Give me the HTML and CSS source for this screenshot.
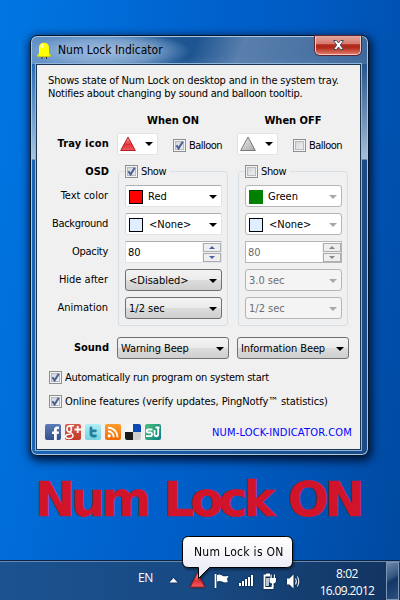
FILE: index.html
```html
<!DOCTYPE html>
<html lang="en">
<head>
<meta charset="utf-8">
<title>Num Lock Indicator</title>
<link rel="stylesheet" href="styles.css">
</head>
<body>
<svg class="defs" width="0" height="0">
  <defs>
    <linearGradient id="red" x1="0" y1="0" x2="0" y2="1"><stop offset="0" stop-color="#f9b0b0"/><stop offset=".55" stop-color="#e03038"/><stop offset="1" stop-color="#f06060"/></linearGradient>
    <linearGradient id="grey" x1="0" y1="0" x2="1" y2="1"><stop offset="0" stop-color="#eee"/><stop offset="1" stop-color="#a8a8a8"/></linearGradient>
    <symbol id="tick" viewBox="0 0 13 13"><path d="M3.4 6.2 5.6 9.4 9.8 2.8" fill="none" stroke="#4a5f97" stroke-width="2"/></symbol>
  </defs>
</svg>
<main class="desktop">
  <section class="window">
    <header class="titlebar">
      <svg class="led" width="14" height="17" viewBox="0 0 14 17"><path d="M2 12V5.500C2 2.500 4 .7 7 .7s5 1.800 5 4.800V12l1.800 1v1.200L11 15H3L.2 14.200V13z" fill="#ff0"/><path d="M.3 13.500 3 14.700h8l2.700-1.200" fill="none" stroke="#c9c400"/><path d="M5 15v2M9.500 15v2" stroke="#333"/><ellipse cx="5" cy="4" rx="1.500" ry="2" fill="#ffffc8"/></svg>
      <h1 class="title">Num Lock Indicator</h1>
      <button class="close" aria-label="Close"><svg width="13" height="12" viewBox="0 0 13 12"><path d="M1.500 1.500h3L6.500 4l2-2.500h3L8.300 6l3.200 4.500h-3l-2-2.500-2 2.500h-3L4.700 6z" fill="#fff" stroke="#4b4a5c"/></svg></button>
    </header>
    <div class="client">
      <p class="intro"><span class="intro-a">Shows state of Num Lock on desktop and in the system tray.</span><br><span class="intro-b">Notifies about changing by sound and balloon tooltip.</span></p>
      <div class="form heads"><span></span><b>When ON</b><b>When OFF</b></div>
      <div class="form tray-row">
        <b class="label">Tray icon</b>
        <div class="tray-set">
          <div class="combo white icon-combo"><svg width="16" height="16" viewBox="0 0 16 16"><path d="M8 1 15.300 14.500H.7z" fill="url(#red)" stroke="#b81c24"/></svg><i class="arrow"></i></div>
          <label class="check"><span class="box"><svg><use href="#tick"/></svg></span>Balloon</label>
        </div>
        <div class="tray-set">
          <div class="combo white icon-combo"><svg width="16" height="16" viewBox="0 0 16 16"><path d="M8 1 15.300 14.500H.7z" fill="url(#grey)" stroke="#777"/></svg><i class="arrow"></i></div>
          <label class="check"><span class="box"></span>Balloon</label>
        </div>
      </div>
      <div class="form osd">
        <div class="labels"><b>OSD</b><span>Text color</span><span class="tight">Background</span><span class="tight">Opacity</span><span>Hide after</span><span>Animation</span></div>
        <div class="group">
          <label class="check"><span class="box"><svg><use href="#tick"/></svg></span>Show</label>
          <div class="combo white"><i class="swatch red"></i>Red<i class="arrow"></i></div>
          <div class="combo white"><i class="swatch pale"></i><span class="wide">&lt;None&gt;</span><i class="arrow"></i></div>
          <div class="spin"><span>80</span><div class="steps"><i class="up"></i><i class="down"></i></div></div>
          <div class="combo"><span>&lt;Disabled&gt;</span><i class="arrow"></i></div>
          <div class="combo">1/2 sec<i class="arrow"></i></div>
        </div>
        <div class="group off">
          <label class="check"><span class="box"></span>Show</label>
          <div class="combo white"><i class="swatch green"></i>Green<i class="arrow"></i></div>
          <div class="combo white"><i class="swatch pale"></i><span class="wide">&lt;None&gt;</span><i class="arrow"></i></div>
          <div class="spin"><span>80</span><div class="steps"><i class="up"></i><i class="down"></i></div></div>
          <div class="combo flat">3.0 sec<i class="arrow"></i></div>
          <div class="combo flat">1/2 sec<i class="arrow"></i></div>
        </div>
      </div>
      <div class="form sound">
        <b class="label">Sound</b>
        <div class="combo">Warning Beep<i class="arrow"></i></div>
        <div class="combo">Information Beep<i class="arrow"></i></div>
      </div>
      <div class="options">
        <label class="check"><span class="box"><svg><use href="#tick"/></svg></span><span class="auto">Automatically run program on system start</span></label>
        <label class="check"><span class="box"><svg><use href="#tick"/></svg></span><span class="online">Online features (verify updates, PingNotfy™ statistics)</span></label>
      </div>
      <footer class="foot">
        <span class="social fb"><svg viewBox="0 0 16 16"><path d="M9 16v-6H7V7.500h2V6c0-2.300 1.200-3.500 3.200-3.500H14V5h-1.200c-.8 0-1 .4-1 1.100v1.400H14L13.700 10h-1.900v6z" fill="#fff"/></svg></span>
        <span class="social gp"><svg viewBox="0 0 16 16"><g fill="none" stroke="#fff"><ellipse cx="4.200" cy="5" rx="2.200" ry="3" stroke-width="1.600"/><path d="M4.500 1.700H9M6 8c-1 1 1.800 1.700 2 3.500.1 2-1.800 3-4 3s-3.500-1-3.300-2.300C1 10.500 3 10.200 5.500 10.300" stroke-width="1.500"/><path d="M9.500 5.500H16M12.700 2v7" stroke-width="1.800"/></g></svg></span>
        <span class="social tw"><svg viewBox="0 0 16 16"><path d="M6 4v5.500q0 2.500 2.500 2.500h2M6 6.800h4.500" fill="none" stroke="#247f9f" stroke-width="2.800" stroke-linecap="round"/></svg></span>
        <span class="social rss"><svg viewBox="0 0 16 16"><circle cx="4.200" cy="11.800" r="1.600" fill="#fff"/><path d="M3 7.300a5.700 5.700 0 0 1 5.700 5.900M3 3.600a9.500 9.500 0 0 1 9.500 9.600" fill="none" stroke="#fff" stroke-width="1.900"/></svg></span>
        <span class="social del"></span>
        <span class="social su"><svg viewBox="0 0 16 16"><path d="M7.500 5.500H3.500C1 5.500 1 8.500 3.500 8.500h1.700c2.600 0 2.300 3.700-.2 3.700H1M9.500 6v4c0 3 3.700 3 3.700 0V3.500M10.500 3.500h4" fill="none" stroke="#fff" stroke-width="1.800"/></svg></span>
        <a class="link">NUM-LOCK-INDICATOR.COM</a>
      </footer>
    </div>
  </section>
  <div class="osd-text">Num Lock ON</div>
  <div class="taskbar">
    <span class="lang">EN</span>
    <svg class="tray" width="140" height="38" viewBox="162 562 140 38">
      <path d="M169.500 582.500h8L173.500 578z" fill="#fff"/>
      <path d="M197.500 573 204.500 587H190.500z" fill="url(#red)" stroke="#b81c24"/>
      <path d="M215.500 574v14" stroke="#fff" stroke-width="1.700"/><path d="M217 575c3-1.500 4 .3 6 1 2 .6 3-.2 5.500 0l-1.500 3 .8 3c-2.500.8-4 .4-5.800-.5-1.800-.8-3-.6-5 0z" fill="#fff"/>
      <path d="M239 583h2v3h-2zM242 581h2v5h-2zM245 579h2v7h-2zM248 577h2v9h-2zM251 575h2v11h-2z" fill="#fff"/>
      <path d="M270 575.500h-5.500V588h8v-3M266 574.500h4" fill="none" stroke="#fff" stroke-width="1.800"/><path d="M266 578h3v8h-3z" fill="#b9c8d8"/><path d="M269.500 578h6.500v3q-.5 2.500-2.500 2.500v4h-1.500v-4q-2.500 0-2.500-2.500zM270.500 574.500h1.200V578h-1.200zM273.800 574.500h1.200V578h-1.200z" fill="#fff"/>
      <path d="M287 578.500h2.500l4-4v14l-4-4H287z" fill="#fff"/><path d="M295.500 578.500q1.800 3 0 6M297.300 576.500q3 5 0 10" fill="none" stroke="#e4ebf3" stroke-width="1.100"/>
    </svg>
    <div class="clock"><span>8:02</span><span class="date">16.09.2012</span></div>
    <div class="peek"></div>
  </div>
  <div class="balloon">
    <svg width="120" height="50" viewBox="180 534 120 50"><defs><linearGradient id="bub" x1="0" y1="0" x2="0" y2="1"><stop offset="0" stop-color="#fff"/><stop offset="1" stop-color="#e7e8f3"/></linearGradient></defs><path d="M188.500 536.500h98q6 0 6 6v19q0 6-6 6H209.500L198.500 578.500V567.500H188.500q-6 0-6-6v-19q0-6 6-6z" fill="url(#bub)" stroke="#000"/></svg>
    <span>Num Lock is ON</span>
  </div>
</main>
</body>
</html>
```

FILE: styles.css
```css
* { box-sizing: border-box; }
body { margin: 0; font: 11px/13px "DejaVu Sans Condensed", "DejaVu Sans", sans-serif; font-stretch: condensed; color: #000; }
p, h1 { margin: 0; }
.defs { position: absolute; }
.desktop {
  position: relative; width: 400px; height: 600px; overflow: hidden;
  background: linear-gradient(100deg, #0077e3 0%, #0060cb 45%, #005cc4 60%, #00489e 100%);
}
.window {
  position: absolute; left: 30px; top: 35px; width: 339px; height: 421px;
  border: 1px solid #06182c; border-radius: 7px; padding: 0 6px;
  background:
    radial-gradient(ellipse 82px 19px at 78px 15px, rgba(200,220,244,.7), rgba(190,215,242,.45) 60%, transparent),
    linear-gradient(110deg, transparent 48%, rgba(160,180,210,.45) 62%, rgba(130,160,200,.3) 100%) 0 0 / 100% 28px no-repeat,
    linear-gradient(180deg, transparent 20px, rgba(215,228,241,.75) 123px, transparent 124px),
    linear-gradient(90deg, #6593c8 0, #1d5592 45%, #205087 100%) 0 0 / 100% 28px no-repeat,
    linear-gradient(90deg, #1b64b4, #1a4b87);
  box-shadow: inset 0 0 0 1px #a9c6e3, 1px 3px 9px 2px rgba(0,12,38,.85);
}
.titlebar { display: flex; height: 28px; }
.led { margin-top: 6px; }
.title { margin: 7px 0 0 7px; font-size: 12px; line-height: 15px; font-weight: 400; flex: 1; white-space: nowrap; }
.close {
  width: 46px; height: 19px; margin-right: 1px; padding: 0; border: 1px solid #f4c6c0; border-top: 0; border-radius: 0 0 5px 5px;
  display: flex; align-items: center; justify-content: center;
  background: linear-gradient(#e2a79f 0, #d5766b 45%, #b32a1b 48%, #b02a1c 65%, #df7763 100%);
  box-shadow: 0 0 0 1px #5d2530;
}
.client {
  width: 325px; height: 386px; background: #f0f0f0; border: 1px solid #1c3551; margin-left: -1px; padding: 8px 0 0 1px;
  box-shadow: 0 0 0 1px #8fb6d8;
}
.intro { padding: 1px 0 0 10px; white-space: nowrap; }
.intro-a { letter-spacing: -.155px; }
.intro-b { letter-spacing: -.21px; }
.form { display: grid; grid-template-columns: 71px 112px 112px; column-gap: 8px; }
.heads { margin-top: 14px; text-align: center; line-height: 14px; }
.tray-row { margin-top: 5px; height: 22px; }
.label { text-align: right; padding-top: 4px; }
.tray-row .label { letter-spacing: .2px; }
.tray-set { display: flex; gap: 15px; }
.combo {
  display: flex; align-items: center; height: 22px; padding: 1px 4px 0 3px; white-space: nowrap;
  border: 1px solid #707070; border-radius: 3px;
  background: linear-gradient(#f3f3f3 0, #ebebeb 48%, #dcdcdc 52%, #cfcfcf 100%);
}
.white { background: #fff; border-color: #abadb3 #e2e3ea #e2e3ea #d5dae2; border-radius: 2px; }
.icon-combo { width: 41px; padding: 0 4px 0 2px; border-color: #e0e3ea; }
.arrow { margin-left: auto; border: 4px solid transparent; border-top-color: #000; border-bottom: 0; }
.check { display: flex; align-items: center; gap: 3px; height: 13px; white-space: nowrap; letter-spacing: -.4px; }
.tray-set .check { margin-top: 6px; letter-spacing: -.55px; }
.box { flex: none; width: 13px; height: 13px; border: 1px solid #8e8f8f; background: linear-gradient(135deg, #cbcfd5, #f6f6f6); box-shadow: inset 0 0 0 1px #f4f4f4, inset 0 0 0 2px #b6babf; }
.box svg { display: block; width: 13px; height: 13px; margin: -1px; }
.osd { margin-top: 10px; height: 161px; }
.labels { display: grid; grid-template-rows: 20px repeat(5, 28px); text-align: right; }
.labels span { padding: 4px 1px 0 0; }
.labels .tight { letter-spacing: -.3px; }
.group {
  display: grid; grid-template-rows: 13px repeat(5, 22px); row-gap: 6px;
  margin: 6px 0 0 1px; width: 110px; height: 155px; border: 1px solid #d5dfe5; border-radius: 3px; padding: 0 6px;
}
.group .check { margin-top: -7px; background: #f0f0f0; width: 45px; height: 13px; }
.group .combo, .group .spin { margin-top: -6px; width: 97px; height: 22px; }
.swatch { width: 14px; height: 14px; border: 1px solid #000; margin-right: 5px; }
.wide { padding-left: 1px; }
.red { background: #f00; }
.green { background: #008000; border-color: #008000; }
.pale { background: #deedff; }
.spin { display: flex; align-items: center; background: #fff; border: 1px solid #abadb3; border-color: #abadb3 #e2e3ea #e2e3ea; padding-left: 2px; }
.steps { margin-left: auto; display: grid; gap: 1px; background: #f0f0f0; padding: 0 0 0 1px; }
.steps i { width: 18px; height: 9px; border: 1px solid #abadb3; background: #eee; display: flex; align-items: center; justify-content: center; }
.steps i::after { content: ""; border: 3px solid transparent; }
.steps .up::after { border-bottom-color: #4862aa; border-top: 0; }
.steps .down::after { border-top-color: #4862aa; border-bottom: 0; }
.off .combo { border: 1px solid #b5b5b5; border-radius: 3px; }
.off .arrow { border-top-color: #a8a8a8; }
.off .flat { background: #f4f4f4; }
.flat, .off .spin { color: #6d6d6d; }
.off .steps .up::after { border-bottom-color: #888; }
.off .steps .down::after { border-top-color: #888; }
.off .spin { border-color: #b5b5b5; }
.sound { margin-top: 11px; height: 22px; }
.sound .combo { padding-left: 3px; letter-spacing: -.1px; }
.options { display: grid; gap: 11px; padding: 12px 0 0 11px; }
.auto { letter-spacing: -.24px; }
.online { letter-spacing: -.11px; }
.foot { display: flex; gap: 4px; margin: 16px 8px 0 7px; align-items: center; }
.social { width: 16px; height: 16px; border-radius: 2px; }
.social svg { display: block; width: 16px; height: 16px; }
.fb { background: linear-gradient(#5c7db7, #32508b); }
.gp { background: linear-gradient(#d45b4b, #c23a2a); }
.tw { background: linear-gradient(#b0eef4, #74d2df); }
.rss { background: linear-gradient(#ff9d2c, #f36b00); }
.del { background: conic-gradient(#0b49b5 25%, #cfcfcf 0 50%, #1b1b1b 0 75%, #f5f5f5 0); }
.su { background: linear-gradient(120deg, #4cc17c, #087d83); }
.link { margin-left: auto; color: #00f; white-space: nowrap; letter-spacing: .19px; }
.osd-text { position: absolute; left: 35px; top: 470px; font: 700 48px/58px "DejaVu Sans", sans-serif; font-stretch: normal; letter-spacing: -4.1px; word-spacing: 4px; -webkit-text-stroke: .6px #d11429; color: #d11429; white-space: nowrap; }
.taskbar {
  position: absolute; left: 0; right: 0; bottom: 0; height: 40px; display: flex;
  border-top: 1px solid #0c2441; box-shadow: inset 0 1px #6589b3;
  background: linear-gradient(90deg, #1b5290, #184a83 50%, #12335f);
  color: #fff; font: 12px/17px "Open Sans", sans-serif;
}
.lang { flex: none; width: 162px; padding: 8px 0 0 138px; font-size: 12px; letter-spacing: -.3px; }
.tray { flex: none; margin-top: 1px; filter: drop-shadow(0 0 1px #061a30); }
.clock { flex: none; width: 82px; padding-top: 4px; display: flex; flex-direction: column; text-align: center; margin-left: 2px; padding-left: 4px; letter-spacing: -.4px; }
.date { letter-spacing: -.65px; }
.peek { flex: none; margin: 1px 1px 0 auto; width: 13px; border: 1px solid #7c96b6; background: linear-gradient(150deg, #6e89aa 0, #315580 40%, #123665 50%, #2b5180); }
.balloon { position: absolute; left: 180px; top: 534px; filter: drop-shadow(1px 2px 1px rgba(0,0,0,.4)); }
.balloon svg { display: block; }
.balloon span { position: absolute; left: 14px; top: 12px; white-space: nowrap; font-size: 12px; letter-spacing: .3px; }
```
